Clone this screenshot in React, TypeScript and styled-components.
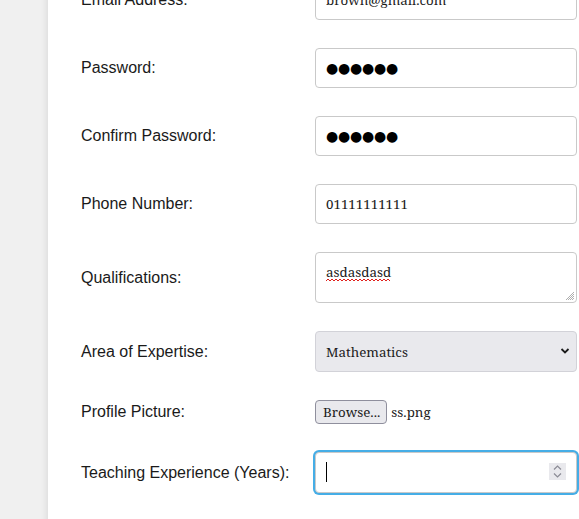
import React from 'react';
import styled, { createGlobalStyle } from 'styled-components';

const GlobalStyle = createGlobalStyle`
    html, body {
        margin: 0;
        padding: 0;
        background: #f0f0f0;
        overflow: hidden;
    }
    body {
        font-family: 'Liberation Sans', Arial, sans-serif;
    }
`;

const controlFont = `'Noto Serif', 'DejaVu Serif', serif`;

const Page = styled.div`
    padding-left: 48px;
    height: 519px;
    overflow: hidden;
`;

const Panel = styled.form`
    margin-top: -20px;
    width: 620px;
    background: #ffffff;
    box-shadow: -2px 0 6px rgba(0, 0, 0, 0.08);
    padding: 0 0 40px 33px;
    display: grid;
    grid-template-columns: 234px 262px;
    row-gap: 28px;
    align-items: center;
`;

const Label = styled.label`
    font-size: 16px;
    color: #1a1a1a;
`;

const Field = styled.div`
    position: relative;
    display: flex;
    align-items: center;
`;

const TextInput = styled.input<{ $focused?: boolean }>`
    box-sizing: border-box;
    width: 262px;
    height: ${(p) => (p.$focused ? 41 : 40)}px;
    padding: 0 10px;
    border: 1px solid #c9c9c9;
    border-radius: 4px;
    background: #ffffff;
    font-family: ${controlFont};
    font-size: 13.33px;
    color: #1b1b1b;
    outline: none;
    box-shadow: ${(p) => (p.$focused ? '0 0 0 2px #45ade6' : 'none')};
    caret-color: transparent;
    appearance: textfield;

    &::-webkit-inner-spin-button,
    &::-webkit-outer-spin-button {
        -webkit-appearance: none;
        margin: 0;
    }
`;

const DotsInput = styled(TextInput)`
    font-family: 'DejaVu Sans', sans-serif;
    font-size: 14px;
    letter-spacing: -0.2px;
    color: #000;
`;

const TextArea = styled.textarea`
    box-sizing: border-box;
    width: 262px;
    height: 51px;
    padding: 10px 10px 8px;
    border: 1px solid #c9c9c9;
    border-radius: 4px;
    font-family: ${controlFont};
    font-size: 13.33px;
    color: #1b1b1b;
    resize: none;
    outline: none;
`;

const Select = styled.select`
    box-sizing: border-box;
    width: 262px;
    height: 41px;
    padding: 0 10px;
    border: 1px solid #d2d2d8;
    border-radius: 4px;
    background: #e9e9ed;
    font-family: ${controlFont};
    font-size: 13.33px;
    color: #1b1b1b;
    appearance: none;
    outline: none;
`;

const Overlay = styled.span`
    position: absolute;
    pointer-events: none;
    display: flex;
`;

const FileRow = styled.label`
    display: flex;
    align-items: center;
    gap: 4px;
    font-family: ${controlFont};
    font-size: 13.33px;
    color: #1b1b1b;

    input {
        display: none;
    }
`;

const BrowseButton = styled.span`
    box-sizing: border-box;
    height: 24px;
    padding: 0 6px 0 7px;
    display: flex;
    align-items: center;
    background: #e9e9ed;
    border: 1px solid #8f8f9d;
    border-radius: 4px;
`;

const Spinner = styled.span`
    position: absolute;
    right: 11px;
    top: 11px;
    width: 17px;
    height: 17px;
    background: #e9e9ed;
    display: flex;
    align-items: center;
    justify-content: center;
    pointer-events: none;
`;

const Caret = styled.span`
    position: absolute;
    left: 11px;
    top: 10px;
    width: 1px;
    height: 20px;
    background: #000;
    pointer-events: none;
`;

const App = () => {
    return (
        <>
            <GlobalStyle />
            <Page>
                <Panel onSubmit={(e) => e.preventDefault()}>
                    <Label htmlFor="email">Email Address:</Label>
                    <Field>
                        <TextInput id="email" type="email" defaultValue="brown@gmail.com" />
                    </Field>

                    <Label htmlFor="password">Password:</Label>
                    <Field>
                        <DotsInput id="password" type="text" defaultValue="●●●●●●" />
                    </Field>

                    <Label htmlFor="confirm">Confirm Password:</Label>
                    <Field>
                        <DotsInput id="confirm" type="text" defaultValue="●●●●●●" />
                    </Field>

                    <Label htmlFor="phone">Phone Number:</Label>
                    <Field>
                        <TextInput id="phone" type="tel" defaultValue="01111111111" />
                    </Field>

                    <Label htmlFor="qual">Qualifications:</Label>
                    <Field>
                        <TextArea id="qual" defaultValue="asdasdasd" spellCheck={false} />
                        {/* spelling squiggle */}
                        <Overlay style={{ left: 11, top: 26 }}>
                            <svg width="64" height="4" viewBox="0 0 64 4">
                                <path
                                    d="M0 3 L2 1 L4 3 L6 1 L8 3 L10 1 L12 3 L14 1 L16 3 L18 1 L20 3 L22 1 L24 3 L26 1 L28 3 L30 1 L32 3 L34 1 L36 3 L38 1 L40 3 L42 1 L44 3 L46 1 L48 3 L50 1 L52 3 L54 1 L56 3 L58 1 L60 3 L62 1 L64 3"
                                    fill="none"
                                    stroke="#e0201c"
                                    strokeWidth="1"
                                />
                            </svg>
                        </Overlay>
                        {/* resize grip */}
                        <Overlay style={{ right: 2, bottom: 2 }}>
                            <svg width="10" height="10" viewBox="0 0 10 10">
                                <path d="M9 1 L1 9 M9 3 L3 9 M9 5 L5 9 M9 7 L7 9" stroke="#9a9a9a" strokeWidth="0.8" />
                            </svg>
                        </Overlay>
                    </Field>

                    <Label htmlFor="area">Area of Expertise:</Label>
                    <Field>
                        <Select id="area" defaultValue="Mathematics">
                            <option>Mathematics</option>
                            <option>Physics</option>
                            <option>Chemistry</option>
                            <option>English</option>
                        </Select>
                        <Overlay style={{ right: 7, top: 16 }}>
                            <svg width="10" height="8" viewBox="0 0 10 8">
                                <path d="M1.5 2 L5 5.5 L8.5 2" fill="none" stroke="#1b1b1b" strokeWidth="1.8" />
                            </svg>
                        </Overlay>
                    </Field>

                    <Label htmlFor="pic">Profile Picture:</Label>
                    <Field>
                        <FileRow>
                            <input id="pic" type="file" />
                            <BrowseButton>Browse...</BrowseButton>
                            <span>ss.png</span>
                        </FileRow>
                    </Field>

                    <Label htmlFor="years">Teaching Experience (Years):</Label>
                    <Field>
                        <TextInput id="years" type="number" $focused />
                        <Caret />
                        <Spinner>
                            <svg width="11" height="15" viewBox="0 0 11 15">
                                <path d="M2 5.5 L5.5 2 L9 5.5 M2 9.5 L5.5 13 L9 9.5" fill="none" stroke="#8b8b95" strokeWidth="1.2" />
                            </svg>
                        </Spinner>
                    </Field>
                </Panel>
            </Page>
        </>
    );
};

export default App;
